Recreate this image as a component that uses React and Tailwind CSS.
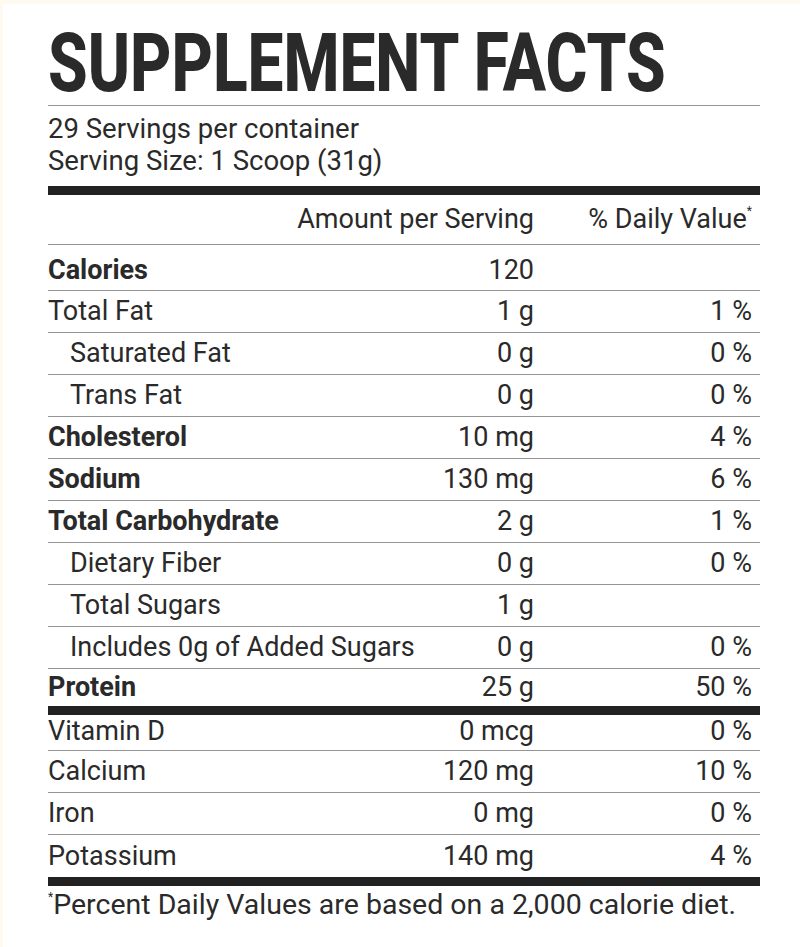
import React from 'react';

const rows = [
    { name: 'Calories', amount: '120', dv: '', bold: true, h: 'h-[46px] pt-[5px]' },
    { name: 'Total Fat', amount: '1 g', dv: '1 %' },
    { name: 'Saturated Fat', amount: '0 g', dv: '0 %', indent: true },
    { name: 'Trans Fat', amount: '0 g', dv: '0 %', indent: true },
    { name: 'Cholesterol', amount: '10 mg', dv: '4 %', bold: true },
    { name: 'Sodium', amount: '130 mg', dv: '6 %', bold: true },
    { name: 'Total Carbohydrate', amount: '2 g', dv: '1 %', bold: true },
    { name: 'Dietary Fiber', amount: '0 g', dv: '0 %', indent: true },
    { name: 'Total Sugars', amount: '1 g', dv: '', indent: true },
    { name: 'Includes 0g of Added Sugars', amount: '0 g', dv: '0 %', indent: true },
    { name: 'Protein', amount: '25 g', dv: '50 %', bold: true, last: true, h: 'h-[37px]' },
];

const minerals = [
    { name: 'Vitamin D', amount: '0 mcg', dv: '0 %', h: 'h-[36px] pb-[2px]' },
    { name: 'Calcium', amount: '120 mg', dv: '10 %' },
    { name: 'Iron', amount: '0 mg', dv: '0 %' },
    { name: 'Potassium', amount: '140 mg', dv: '4 %', last: true },
];

const FactRow = ({ row }) => (
    <div className={`flex items-center ${row.h || 'h-[42px]'} ${row.last ? '' : 'border-b border-[#949494]'}`}>
        <div className={`flex-1 whitespace-nowrap ${row.indent ? 'pl-[22px]' : ''} ${row.bold ? 'font-bold' : ''}`}>{row.name}</div>
        <div className="w-[100px] text-right whitespace-nowrap">{row.amount}</div>
        <div className="w-[226px] pr-[8px] text-right whitespace-nowrap">{row.dv}</div>
    </div>
);

export default function App() {
    return (
        <div className="min-h-screen bg-[#fffaf0] pt-[4px] pl-[3px]" style={{ fontFamily: 'Roboto, "Liberation Sans", sans-serif' }}>
            <div className="bg-white min-h-[943px] pl-[45px] pr-[40px] text-[#2a2a2a]">
                <div className="pt-[18px] h-[102px] border-b border-[#949494]">
                    <h1 className="inline-block origin-left scale-x-[0.78] whitespace-nowrap text-[82px] leading-none font-extrabold">
                        SUPPLEMENT FACTS
                    </h1>
                </div>
                <div className="pt-[7px] text-[27.5px] leading-[32px]">
                    <div>29 Servings per container</div>
                    <div>Serving Size: 1 Scoop (31g)</div>
                </div>
                <div className="mt-[9px] h-[9px] bg-[#222]" />
                <div className="text-[27px]">
                    <div className="flex items-center h-[50px] border-b border-[#949494]">
                        <div className="flex-1" />
                        <div className="text-right whitespace-nowrap">Amount per Serving</div>
                        <div className="w-[226px] pr-[8px] text-right whitespace-nowrap">
                            % Daily Value<sup className="text-[12px] top-[-1.1em]">*</sup>
                        </div>
                    </div>
                    {rows.map((row) => (
                        <FactRow key={row.name} row={row} />
                    ))}
                    <div className="h-[9px] bg-[#222]" />
                    {minerals.map((row) => (
                        <FactRow key={row.name} row={row} />
                    ))}
                    <div className="h-[9px] bg-[#222]" />
                </div>
                <p className="mt-[5px] text-[28.5px] leading-none">
                    <sup className="text-[12px] top-[-1.1em]">*</sup>Percent Daily Values are based on a 2,000 calorie diet.
                </p>
            </div>
        </div>
    );
}
